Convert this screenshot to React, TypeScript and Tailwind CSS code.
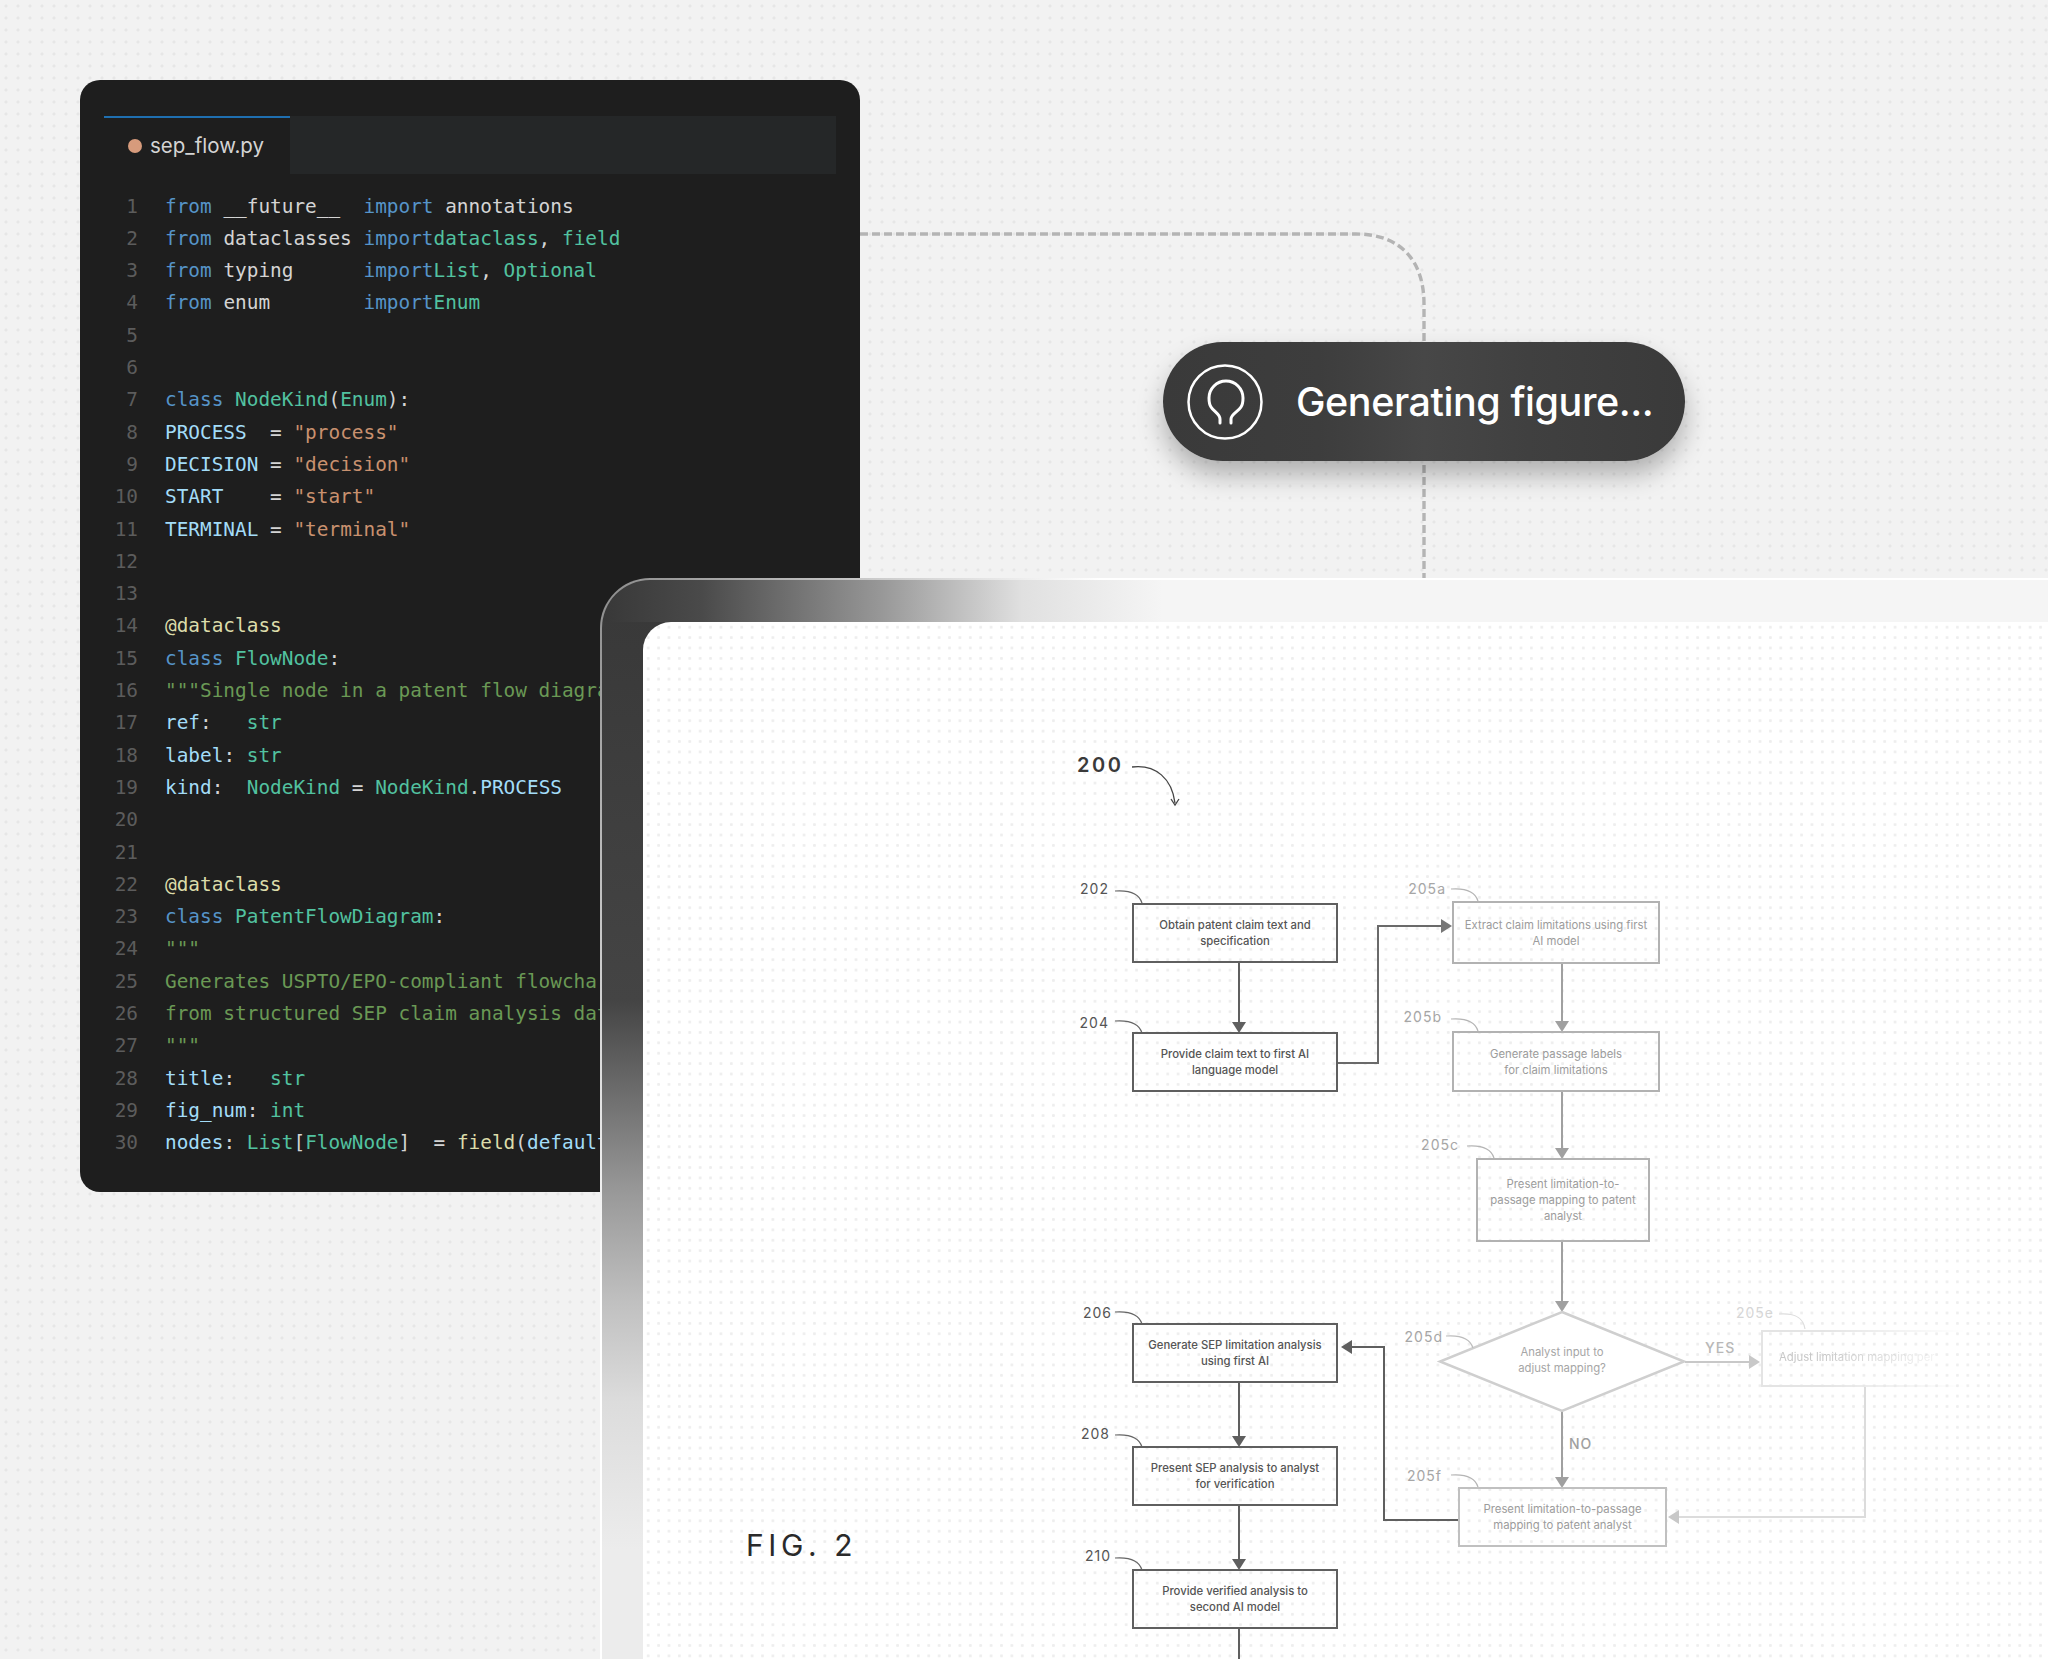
import React from "react";

const kw = "text-[#5694c8]";
const ty = "text-[#52c2a0]";
const st = "text-[#c9916f]";
const va = "text-[#a3dcf8]";
const fn = "text-[#dcdcaa]";
const cm = "text-[#6a9955]";
const pl = "text-[#d4d4d4]";

type Tok = [string, string];

const codeLines: Tok[][] = [
  [["from", kw], [" __future__  ", pl], ["import", kw], [" annotations", pl]],
  [["from", kw], [" dataclasses ", pl], ["import", kw], ["dataclass", ty], [", ", pl], ["field", ty]],
  [["from", kw], [" typing      ", pl], ["import", kw], ["List", ty], [", ", pl], ["Optional", ty]],
  [["from", kw], [" enum        ", pl], ["import", kw], ["Enum", ty]],
  [],
  [],
  [["class ", kw], ["NodeKind", ty], ["(", pl], ["Enum", ty], ["):", pl]],
  [["PROCESS", va], ["  = ", pl], ['"process"', st]],
  [["DECISION", va], [" = ", pl], ['"decision"', st]],
  [["START", va], ["    = ", pl], ['"start"', st]],
  [["TERMINAL", va], [" = ", pl], ['"terminal"', st]],
  [],
  [],
  [["@dataclass", fn]],
  [["class ", kw], ["FlowNode", ty], [":", pl]],
  [['"""Single node in a patent flow diagram."""', cm]],
  [["ref", va], [":   ", pl], ["str", ty]],
  [["label", va], [": ", pl], ["str", ty]],
  [["kind", va], [":  ", pl], ["NodeKind", ty], [" = ", pl], ["NodeKind", ty], [".", pl], ["PROCESS", va]],
  [],
  [],
  [["@dataclass", fn]],
  [["class ", kw], ["PatentFlowDiagram", ty], [":", pl]],
  [['"""', cm]],
  [["Generates USPTO/EPO-compliant flowcharts", cm]],
  [["from structured SEP claim analysis data.", cm]],
  [['"""', cm]],
  [["title", va], [":   ", pl], ["str", ty]],
  [["fig_num", va], [": ", pl], ["int", ty]],
  [["nodes", va], [": ", pl], ["List", ty], ["[", pl], ["FlowNode", ty], ["]  = ", pl], ["field", fn], ["(", pl], ["default_factory", va], ["=", pl], ["list", ty], [")", pl]],
];

type Node = { lines: string[]; cls: string };

// boxes sit on the drawing canvas, page coordinates
const nodes: Node[] = [
  { lines: ["Obtain patent claim text and", "specification"], cls: "left-[1132px] top-[903px] w-[206px] h-[60px] border-[#5f5f5f] text-[#555555] font-medium" },
  { lines: ["Provide claim text to first AI", "language model"], cls: "left-[1132px] top-[1032px] w-[206px] h-[60px] border-[#5f5f5f] text-[#555555] font-medium" },
  { lines: ["Extract claim limitations using first", "AI model"], cls: "left-[1452px] top-[901px] w-[208px] h-[63px] border-[#b2b2b2] text-[#9c9c9c]" },
  { lines: ["Generate passage labels", "for claim limitations"], cls: "left-[1452px] top-[1031px] w-[208px] h-[61px] border-[#b2b2b2] text-[#9c9c9c]" },
  { lines: ["Present limitation-to-", "passage mapping to patent", "analyst"], cls: "left-[1476px] top-[1158px] w-[174px] h-[84px] border-[#b2b2b2] text-[#9c9c9c]" },
  { lines: ["Generate SEP limitation analysis", "using first AI"], cls: "left-[1132px] top-[1323px] w-[206px] h-[60px] border-[#5f5f5f] text-[#555555] font-medium" },
  { lines: ["Present SEP analysis to analyst", "for verification"], cls: "left-[1132px] top-[1446px] w-[206px] h-[60px] border-[#5f5f5f] text-[#555555] font-medium" },
  { lines: ["Provide verified analysis to", "second AI model"], cls: "left-[1132px] top-[1569px] w-[206px] h-[60px] border-[#5f5f5f] text-[#555555] font-medium" },
  { lines: ["Present limitation-to-passage", "mapping to patent analyst"], cls: "left-[1458px] top-[1487px] w-[209px] h-[60px] border-[#c0c0c0] text-[#9c9c9c]" },
];

const labels: { t: string; cls: string }[] = [
  { t: "202", cls: "right-[939px] top-[880px] text-[#555555]" },
  { t: "204", cls: "right-[939px] top-[1014px] text-[#555555]" },
  { t: "206", cls: "right-[936px] top-[1304px] text-[#555555]" },
  { t: "208", cls: "right-[938px] top-[1425px] text-[#555555]" },
  { t: "210", cls: "right-[937px] top-[1547px] text-[#555555]" },
  { t: "205a", cls: "right-[602px] top-[880px] text-[#a6a6a6]" },
  { t: "205b", cls: "right-[606px] top-[1008px] text-[#a6a6a6]" },
  { t: "205c", cls: "right-[589px] top-[1136px] text-[#a6a6a6]" },
  { t: "205d", cls: "right-[605px] top-[1328px] text-[#a6a6a6]" },
  { t: "205e", cls: "right-[274px] top-[1304px] text-[#d6d6d6]" },
  { t: "205f", cls: "right-[606px] top-[1467px] text-[#a6a6a6]" },
  { t: "YES", cls: "left-[1705px] top-[1339px] text-[#b8b8b8] font-medium" },
  { t: "NO", cls: "left-[1569px] top-[1435px] text-[#a0a0a0] font-medium" },
];

const leads: { d: string; c: string }[] = [
  { d: "M1115 891c14-1 24 2 27 12", c: "#666666" },
  { d: "M1115 1021c14-1 24 2 27 12", c: "#666666" },
  { d: "M1115 1312c14-1 24 2 27 12", c: "#666666" },
  { d: "M1115 1435c14-1 24 2 27 12", c: "#666666" },
  { d: "M1115 1558c14-1 24 2 27 12", c: "#666666" },
  { d: "M1451 889c14-1 24 2 27 12", c: "#b5b5b5" },
  { d: "M1451 1019c14-1 24 2 27 12", c: "#b5b5b5" },
  { d: "M1467 1146c14-1 24 2 27 12", c: "#b5b5b5" },
  { d: "M1446 1336c14-1 24 2 27 12", c: "#bdbdbd" },
  { d: "M1779 1314c14-1 24 2 26 15", c: "#dddddd" },
  { d: "M1451 1475c14-1 24 2 27 12", c: "#b5b5b5" },
];

const Arrow = ({ x, y, dir, c }: { x: number; y: number; dir: "d" | "r" | "l"; c: string }) => {
  const pts =
    dir === "d"
      ? `${x - 7},${y - 11} ${x + 7},${y - 11} ${x},${y}`
      : dir === "r"
        ? `${x - 11},${y - 7} ${x - 11},${y + 7} ${x},${y}`
        : `${x + 11},${y - 7} ${x + 11},${y + 7} ${x},${y}`;
  return <polygon points={pts} fill={c} />;
};

const FlowLines = () => (
  <svg className="absolute inset-0 w-full h-full" viewBox="0 0 2048 1659" fill="none">
    <g stroke="#5f5f5f" strokeWidth="2">
      <path d="M1239 963V1024" />
      <path d="M1338 1063H1378V926H1445" stroke="#6a6a6a" />
      <path d="M1239 1383V1438" />
      <path d="M1239 1506V1561" />
      <path d="M1239 1629V1659" />
      <path d="M1459 1520H1384V1347H1348" />
    </g>
    <Arrow x={1239} y={1033} dir="d" c="#5f5f5f" />
    <Arrow x={1452} y={926} dir="r" c="#777777" />
    <Arrow x={1239} y={1447} dir="d" c="#5f5f5f" />
    <Arrow x={1239} y={1570} dir="d" c="#5f5f5f" />
    <Arrow x={1341} y={1347} dir="l" c="#5f5f5f" />
    <g stroke="#a0a0a0" strokeWidth="2">
      <path d="M1562 964V1024" />
      <path d="M1562 1092V1150" />
      <path d="M1562 1242V1304" />
      <path d="M1562 1411V1478" />
    </g>
    <Arrow x={1562} y={1032} dir="d" c="#a0a0a0" />
    <Arrow x={1562} y={1159} dir="d" c="#a0a0a0" />
    <Arrow x={1562} y={1312} dir="d" c="#a0a0a0" />
    <Arrow x={1562} y={1488} dir="d" c="#a0a0a0" />
    <polygon points="1562,1312 1684,1361.500 1562,1411 1440,1361.500" stroke="#cfcfcf" strokeWidth="2.500" fill="#ffffff" />
    <path d="M1685 1362H1752" stroke="#c8c8c8" strokeWidth="2" />
    <Arrow x={1760} y={1362} dir="r" c="#c8c8c8" />
    <path d="M1865 1387V1517H1676" stroke="#dcdcdc" strokeWidth="2" />
    <Arrow x={1668} y={1517} dir="l" c="#c8c8c8" />
    {leads.map((l) => (
      <path key={l.d} d={l.d} stroke={l.c} strokeWidth="1.200" />
    ))}
    <path d="M1132 767c24-3 40 12 43 36" stroke="#444444" strokeWidth="1.300" />
    <path d="M1171 799l4 6 4-6" stroke="#444444" strokeWidth="1.300" />
  </svg>
);

export default function App() {
  return (
    <div className="relative w-[2048px] h-[1659px] overflow-hidden bg-[#f2f2f2] bg-[radial-gradient(circle,#e6e6e6_1.300px,transparent_1.800px)] bg-[length:12px_12px] pl-20 pt-20 font-['Inter',sans-serif]">
      {/* Code editor */}
      <div className="w-[780px] h-[1112px] rounded-[20px] bg-[#1e1e1e] pt-9 pl-6 pr-6 overflow-hidden">
        <div className="flex h-[58px]">
          <div className="w-[186px] shrink-0 border-t-2 border-[#1f6fb0] flex items-center gap-[8px] pl-[24px]">
            <span className="w-[14px] h-[14px] shrink-0 rounded-full bg-[#d79b7c]" />
            <span className="mt-[1px] text-[20.5px] text-[#d4d4d4]">sep_flow.py</span>
          </div>
          <div className="flex-1 bg-[#252728]" />
        </div>
        <div className="mt-[16.600px] -ml-6 font-['DejaVu_Sans_Mono',monospace] text-[19.400px] leading-[32.300px] whitespace-pre">
          {codeLines.map((line, i) => (
            <div key={i} className="flex h-[32.300px]">
              <span className="w-[58px] text-right text-[#5c5c5c] mr-[27px]">{i + 1}</span>
              <span>
                {line.map(([text, color], j) => (
                  <span key={j} className={color}>
                    {text}
                  </span>
                ))}
              </span>
            </div>
          ))}
        </div>
      </div>

      {/* Dashed connector from the editor to the figure */}
      <svg className="absolute left-[860px] top-[220px] w-[580px] h-[360px]" viewBox="0 0 580 360" fill="none">
        <path d="M0 14H496C540 14 564 40 564 84V358" stroke="#b4b4b4" strokeWidth="3.400" strokeDasharray="8 4" />
      </svg>

      {/* Status pill */}
      <div className="absolute left-[1163px] top-[342px] w-[522px] h-[119px] rounded-full bg-[linear-gradient(90deg,#3a3a3a_0%,#3d3d3d_30%,#474747_50%,#404040_70%,#3a3a3a_100%)] shadow-[0_14px_26px_rgba(0,0,0,0.28)] flex items-center pl-6 gap-[33px]">
        <svg width="76" height="76" viewBox="0 0 76 76" fill="none" stroke="#ffffff" strokeWidth="2.500" strokeLinecap="round">
          <circle cx="38" cy="38" r="36.500" />
          <path d="M33 59V55C33 50 27 48 24 43C22 40 22 37 22 34A17 17 0 0 1 56 34C56 37 56 40 54 43C51 48 44 50 44 55V59" strokeWidth="3" />
        </svg>
        <span className="mt-[2px] text-[39.500px] font-medium tracking-[-0.45px] text-white whitespace-nowrap">Generating figure...</span>
      </div>

      {/* Figure window, with a hairline that brightens away from the corner */}
      <div className="absolute left-[600px] top-[578px] right-0 bottom-0 rounded-tl-[50px] pl-[2px] pt-[2px] bg-[radial-gradient(ellipse_500px_700px_at_0_0,#8c8c8c_0%,#ffffff_100%)]">
        <div className="h-full rounded-tl-[48px] bg-[linear-gradient(90deg,#383838_0px,#4a4a4a_100px,#989898_280px,#e0e0e0_420px,#f5f5f5_560px),linear-gradient(180deg,#383838_0px,#444444_420px,#999999_613px,#c0c0c0_722px,#dcdcdc_822px,#ececec_970px)] bg-[length:100%_42px,100%_100%] bg-no-repeat pl-[41px] pt-[42px]">
          <div className="h-full rounded-tl-[28px] bg-white bg-[radial-gradient(circle,#eeeeee_1.200px,transparent_1.700px)] bg-[length:10.400px_10.400px]" />
        </div>
      </div>

      {/* Flow diagram canvas */}
      <div className="absolute inset-0">
        <FlowLines />
        <span className="absolute left-[746px] top-[1526px] text-[30px] leading-[38px] tracking-[4.600px] text-[#2a2a2a]">FIG. 2</span>
        <span className="absolute left-[1077px] top-[753px] text-[20px] leading-6 font-semibold tracking-[2.600px] text-[#3a3a3a]">200</span>
        {labels.map((l) => (
          <span key={l.t} className={`absolute text-[14px] leading-[18px] tracking-[1px] ${l.cls}`}>
            {l.t}
          </span>
        ))}
        {nodes.map((n) => (
          <div key={n.lines[0]} className={`absolute border-2 flex flex-col items-center justify-center text-[11.300px] leading-4 text-center whitespace-nowrap ${n.cls}`}>
            {n.lines.map((t) => (
              <span key={t}>{t}</span>
            ))}
          </div>
        ))}
        <div className="absolute left-[1490px] top-[1344px] w-[144px] flex flex-col items-center text-[11.300px] leading-4 text-[#a6a6a6]">
          <span>Analyst input to</span>
          <span>adjust mapping?</span>
        </div>
        <div className="absolute left-[1761px] top-[1330px] w-[205px] h-[57px] border-2 border-r-0 border-[#e4e4e4] pl-[16px] pt-[17px] text-[11.300px] leading-4 text-[#c8c8c8] whitespace-nowrap overflow-hidden [mask-image:linear-gradient(90deg,#000_30%,transparent_100%)]">
          Adjust limitation mapping per
        </div>
      </div>
    </div>
  );
}
